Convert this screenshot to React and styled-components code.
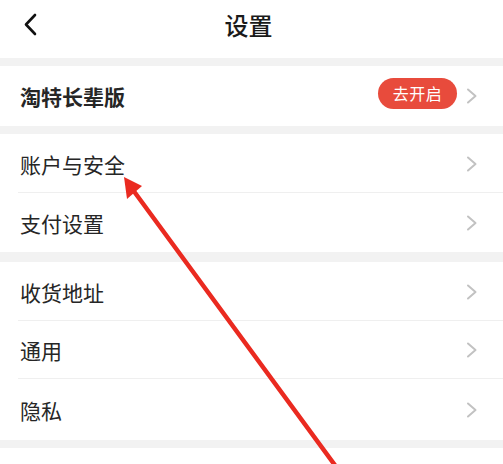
import React from "react";
import styled, { createGlobalStyle } from "styled-components";

const GlobalStyle = createGlobalStyle`
  html, body {
    margin: 0;
    padding: 0;
    background: #ffffff;
    font-family: "Noto Sans CJK SC", "Noto Sans", sans-serif;
    color: #222222;
  }
`;

const Page = styled.div`
  position: relative;
  width: 503px;
  height: 464px;
  overflow: hidden;
  background: #ffffff;
`;

const Header = styled.div`
  display: flex;
  align-items: center;
  justify-content: center;
  position: relative;
  height: 48px;
  padding-bottom: 10px;
`;

const BackButton = styled.div`
  position: absolute;
  left: 23px;
  top: 13px;
  width: 16px;
  height: 24px;
  display: flex;
`;

const Title = styled.div`
  font-size: 24px;
  font-weight: 500;
  color: #1a1a1a;
  margin-left: -6px;
`;

const Gap = styled.div`
  height: ${(p) => p.h}px;
  background: #f2f2f2;
`;

const Section = styled.div`
  background: #ffffff;
`;

const Row = styled.div`
  display: flex;
  align-items: center;
  height: ${(p) => p.h}px;
  padding: 0 25px 0 20px;
  position: relative;
  ${(p) =>
    p.divider &&
    `&::after {
      content: "";
      position: absolute;
      left: 18px;
      right: 0;
      bottom: 0;
      height: 1px;
      background: #efefef;
    }`}
`;

const Label = styled.div`
  flex: 1;
  font-size: 21px;
  font-weight: ${(p) => (p.bold ? 700 : 400)};
  color: #262626;
`;

const Badge = styled.div`
  display: flex;
  align-items: center;
  justify-content: center;
  width: 79px;
  height: 31px;
  margin-right: 9px;
  margin-top: -6px;
  border-radius: 16px;
  background: #e84b3c;
  color: #ffffff;
  font-size: 16px;
  letter-spacing: 0.5px;
`;

const Chevron = () => (
  <svg width="12" height="16" viewBox="0 0 12 16">
    <path d="M2 1.5 L9.5 8 L2 14.5" fill="none" stroke="#c2c2c2" strokeWidth="2" strokeLinecap="round" strokeLinejoin="round" />
  </svg>
);

const ArrowOverlay = styled.svg`
  position: absolute;
  left: 0;
  top: 0;
  pointer-events: none;
`;

const items = [
  [
    { label: "账户与安全", h: 59 },
    { label: "支付设置", h: 59 },
  ],
  [
    { label: "收货地址", h: 59 },
    { label: "通用", h: 58 },
    { label: "隐私", h: 61 },
  ],
];

export default function App() {
  return (
    <Page>
      <GlobalStyle />
      <Header>
        <BackButton>
          <svg width="16" height="24" viewBox="0 0 16 24">
            <path d="M12 2 L3 11.5 L12 21" fill="none" stroke="#111" strokeWidth="2.6" strokeLinecap="round" strokeLinejoin="round" />
          </svg>
        </BackButton>
        <Title>设置</Title>
      </Header>
      <Gap h={8} />
      <Section>
        <Row h={60}>
          <Label bold>淘特长辈版</Label>
          <Badge>去开启</Badge>
          <Chevron />
        </Row>
      </Section>
      <Gap h={8} />
      <Section>
        {items[0].map((it, i) => (
          <Row key={it.label} h={it.h} divider={i < items[0].length - 1}>
            <Label>{it.label}</Label>
            <Chevron />
          </Row>
        ))}
      </Section>
      <Gap h={10} />
      <Section>
        {items[1].map((it, i) => (
          <Row key={it.label} h={it.h} divider={i < items[1].length - 1}>
            <Label>{it.label}</Label>
            <Chevron />
          </Row>
        ))}
      </Section>
      <Gap h={8} />
      <ArrowOverlay width="503" height="464" viewBox="0 0 503 464">
        <line x1="133" y1="190" x2="337" y2="468" stroke="#ea2a20" strokeWidth="4.5" strokeLinecap="round" />
        <polygon points="124,177 142,186 127,199" fill="#ea2a20" />
      </ArrowOverlay>
    </Page>
  );
}
